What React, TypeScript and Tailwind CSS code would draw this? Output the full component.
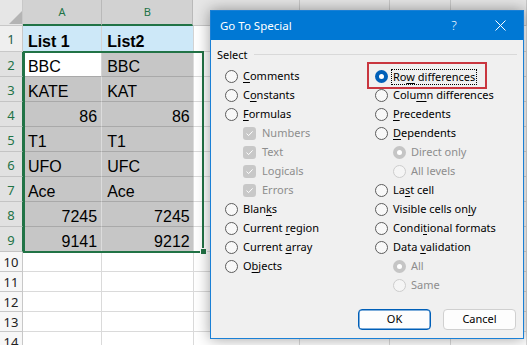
import React from "react";

type Row = { n: number; h: number; a?: string; b?: string; num?: boolean; head?: boolean };

const rows: Row[] = [
  { n: 1, h: 26, a: "List 1", b: "List2", head: true },
  { n: 2, h: 25, a: "BBC", b: "BBC" },
  { n: 3, h: 25, a: "KATE", b: "KAT" },
  { n: 4, h: 25, a: "86", b: "86", num: true },
  { n: 5, h: 25, a: "T1", b: "T1" },
  { n: 6, h: 25, a: "UFO", b: "UFC" },
  { n: 7, h: 25, a: "Ace", b: "Ace" },
  { n: 8, h: 25, a: "7245", b: "7245", num: true },
  { n: 9, h: 25, a: "9141", b: "9212", num: true },
  { n: 10, h: 20 },
  { n: 11, h: 20 },
  { n: 12, h: 20 },
  { n: 13, h: 20 },
  { n: 14, h: 20 },
];

function HeaderRow() {
  return (
    <div className="flex h-[26px] shrink-0">
      <div className="w-[24px] h-full bg-[#e6e6e6] border-r border-b border-[#c8c8c8] relative">
        <svg className="absolute left-[9px] top-[11px]" width="13" height="13" viewBox="0 0 13 13">
          <polygon points="13,0 13,13 0,13" fill="#b4b4b4" />
        </svg>
      </div>
      <div className="w-[83px] h-full bg-[#d2d2d2] border-r border-[#b9b9b9] border-b-2 border-b-[#217346] flex items-center justify-center text-[11px] text-[#217346] font-['Noto_Sans',sans-serif]">
        A
      </div>
      <div className="w-[96px] h-full bg-[#d2d2d2] border-r border-[#b9b9b9] border-b-2 border-b-[#217346] flex items-center justify-center text-[11px] text-[#217346] font-['Noto_Sans',sans-serif]">
        B
      </div>
      <div className="w-[112px] h-full bg-[#e6e6e6] border-r border-b border-[#c8c8c8]" />
      <div className="w-[94px] h-full bg-[#e6e6e6] border-r border-b border-[#c8c8c8]" />
      <div className="w-[64px] h-full bg-[#e6e6e6] border-r border-b border-[#c8c8c8]" />
      <div className="w-[80px] h-full bg-[#e6e6e6] border-r border-b border-[#c8c8c8]" />
    </div>
  );
}

function SheetRow({ r }: { r: Row }) {
  const sel = r.n >= 2 && r.n <= 9;
  const rh = sel
    ? "bg-[#e1e1e1] text-[#217346] border-b border-[#c4c4c4] border-r border-r-[#217346]"
    : r.n === 1
    ? "bg-[#efefef] text-[#245b49] border-b border-[#c8c8c8] border-r border-r-[#c8c8c8]"
    : "bg-[#f7f7f7] text-[#222222] border-b border-[#c8c8c8] border-r border-r-[#c8c8c8]";
  const cellBase = "h-full flex items-end pb-0 leading-[18px] text-[16px] text-black whitespace-nowrap overflow-hidden";
  const aCls = r.head
    ? "bg-[#cde8f8] border-r border-[#d4d4d4] border-b border-b-[#d4d4d4] font-bold"
    : sel
    ? r.n === 2
      ? "bg-white border-r border-[#d4d4d4] border-b border-b-[#a9a9a9]"
      : "bg-[#c6c6c6] border-r border-[#dcdcdc] border-b border-b-[#a9a9a9]"
    : "bg-white border-r border-[#dadada] border-b border-b-[#dadada]";
  const bCls = r.head
    ? "bg-[#cde8f8] border-r border-[#d4d4d4] border-b border-b-[#d4d4d4] font-bold"
    : sel
    ? "bg-[#c6c6c6] border-r border-[#dcdcdc] border-b border-b-[#a9a9a9]"
    : "bg-white border-r border-[#dadada] border-b border-b-[#dadada]";
  const plain = "h-full bg-white border-r border-b border-[#dadada]";
  return (
    <div className="flex shrink-0" style={{ height: r.h }}>
      <div className={`w-[24px] h-full flex items-center justify-center text-[13px] font-['Noto_Sans',sans-serif] ${rh}`}>
        <span className="mt-[3px]">{r.n}</span>
      </div>
      <div className={`w-[83px] ${cellBase} ${aCls} ${r.num ? "justify-end pr-[4px]" : "pl-[5px]"}`}>{r.a}</div>
      <div className={`w-[96px] ${cellBase} ${bCls} ${r.num ? "justify-end pr-[3px]" : "pl-[5px]"}`}>{r.b}</div>
      <div className={`w-[112px] ${plain}`} />
      <div className={`w-[94px] ${plain}`} />
      <div className={`w-[64px] ${plain}`} />
      <div className={`w-[80px] ${plain}`} />
    </div>
  );
}

type RK = "off" | "on" | "disOn" | "disOff";

function Radio({ kind }: { kind: RK }) {
  if (kind === "on")
    return (
      <span className="w-[13px] h-[13px] rounded-full bg-[#005fb8] flex items-center justify-center shrink-0">
        <span className="w-[5px] h-[5px] rounded-full bg-white" />
      </span>
    );
  if (kind === "disOn")
    return (
      <span className="w-[13px] h-[13px] rounded-full bg-[#c5c5c5] flex items-center justify-center shrink-0">
        <span className="w-[5px] h-[5px] rounded-full bg-white" />
      </span>
    );
  if (kind === "disOff")
    return <span className="w-[13px] h-[13px] rounded-full border border-[#cdcdcd] bg-[#f5f5f5] shrink-0" />;
  return <span className="w-[13px] h-[13px] rounded-full border border-[#5c5c5c] bg-[#f8f8f8] shrink-0" />;
}

function Check() {
  return (
    <span className="w-[13px] h-[13px] rounded-[3px] bg-[#c8c8c8] flex items-center justify-center shrink-0">
      <svg width="9" height="9" viewBox="0 0 9 9">
        <path d="M1.5 4.6 L3.6 6.6 L7.6 2.4" fill="none" stroke="#ffffff" strokeWidth="1" />
      </svg>
    </span>
  );
}

function Label({ t, u, dis, focus }: { t: string; u?: number; dis?: boolean; focus?: boolean }) {
  const content =
    u === undefined ? (
      t
    ) : (
      <>
        {t.slice(0, u)}
        <span className="underline underline-offset-[2px] decoration-1">{t[u]}</span>
        {t.slice(u + 1)}
      </>
    );
  return (
    <span
      className={`whitespace-nowrap ${dis ? "text-[#8d8d8d]" : "text-black"} ${
        focus ? "outline-1 outline-dotted outline-black -ml-[1px] px-[1px] leading-[14px]" : ""
      }`}
    >
      {content}
    </span>
  );
}

function Opt({ kind, t, u, dis, sub, focus }: { kind: RK; t: string; u?: number; dis?: boolean; sub?: boolean; focus?: boolean }) {
  return (
    <div className={`flex items-center h-[19px] gap-[5px] ${sub ? "pl-[18px]" : ""}`}>
      <Radio kind={kind} />
      <Label t={t} u={u} dis={dis} focus={focus} />
    </div>
  );
}

function CheckOpt({ t }: { t: string }) {
  return (
    <div className="flex items-center h-[19px] gap-[6px] pl-[18px]">
      <Check />
      <Label t={t} dis />
    </div>
  );
}

function Dialog() {
  return (
    <div className="absolute left-[210px] top-[10px] w-[314px] h-[329px] bg-[#f0f0f0] border border-[#1a80d6] shadow-[0_0_14px_rgba(0,0,0,0.38)] flex flex-col font-['Noto_Sans',sans-serif] text-[11px]">
      <div className="h-[29px] bg-[#0078d4] flex items-center text-white shrink-0">
        <span className="pl-[9px] text-[11.5px]">Go To Special</span>
        <span className="ml-auto w-[46px] text-center text-[13px] font-light">?</span>
        <span className="w-[46px] flex justify-center">
          <svg width="11" height="11" viewBox="0 0 11 11">
            <path d="M0.5 0.5 L10.5 10.5 M10.5 0.5 L0.5 10.5" stroke="#ffffff" strokeWidth="1" />
          </svg>
        </span>
      </div>
      <div className="flex-1 flex flex-col pt-[7px] px-[6px] pb-[8px]">
        <div className="flex items-center h-[17px]">
          <span className="text-black">Select</span>
          <div className="flex-1 h-px bg-[#d9d9d9] ml-[6px] -mt-[3px]" />
        </div>
        <div className="flex pl-[8px] mt-[3px]">
          <div className="w-[150px] flex flex-col">
            <Opt kind="off" t="Comments" u={0} />
            <Opt kind="off" t="Constants" u={1} />
            <Opt kind="off" t="Formulas" u={0} />
            <CheckOpt t="Numbers" />
            <CheckOpt t="Text" />
            <CheckOpt t="Logicals" />
            <CheckOpt t="Errors" />
            <Opt kind="off" t="Blanks" u={4} />
            <Opt kind="off" t="Current region" u={8} />
            <Opt kind="off" t="Current array" u={8} />
            <Opt kind="off" t="Objects" u={1} />
          </div>
          <div className="flex flex-col">
            <Opt kind="on" t="Row differences" u={2} focus />
            <Opt kind="off" t="Column differences" u={4} />
            <Opt kind="off" t="Precedents" u={0} />
            <Opt kind="off" t="Dependents" u={0} />
            <Opt kind="disOn" t="Direct only" dis sub />
            <Opt kind="disOff" t="All levels" dis sub />
            <Opt kind="off" t="Last cell" u={2} />
            <Opt kind="off" t="Visible cells only" u={16} />
            <Opt kind="off" t="Conditional formats" u={5} />
            <Opt kind="off" t="Data validation" u={5} />
            <Opt kind="disOn" t="All" dis sub />
            <Opt kind="disOff" t="Same" dis sub />
          </div>
        </div>
        <div className="mt-auto flex justify-end gap-[12px] pr-[1px]">
          <button className="w-[73px] h-[21px] rounded-[4px] bg-[#fdfdfd] border border-[#005fb8] shadow-[inset_0_0_0_0.5px_#005fb8] text-black text-[11px]">
            OK
          </button>
          <button className="w-[73px] h-[21px] rounded-[4px] bg-[#fdfdfd] border border-[#d0d0d0] text-black text-[11px]">
            Cancel
          </button>
        </div>
      </div>
      <div className="absolute left-[156px] top-[51px] w-[120px] h-[27px] border-2 border-[#c9363f] pointer-events-none" />
    </div>
  );
}

export default function App() {
  return (
    <div className="relative w-[527px] h-[345px] overflow-hidden bg-white font-['Liberation_Sans',Arial,sans-serif]">
      <div className="flex flex-col">
        <HeaderRow />
        {rows.map((r) => (
          <SheetRow key={r.n} r={r} />
        ))}
      </div>
      <div className="absolute left-[23px] top-[51px] w-[181px] h-[202px] border-2 border-[#217346] pointer-events-none" />
      <div className="absolute left-[200px] top-[248px] w-[7px] h-[7px] bg-[#217346] border border-white" />
      <Dialog />
    </div>
  );
}
